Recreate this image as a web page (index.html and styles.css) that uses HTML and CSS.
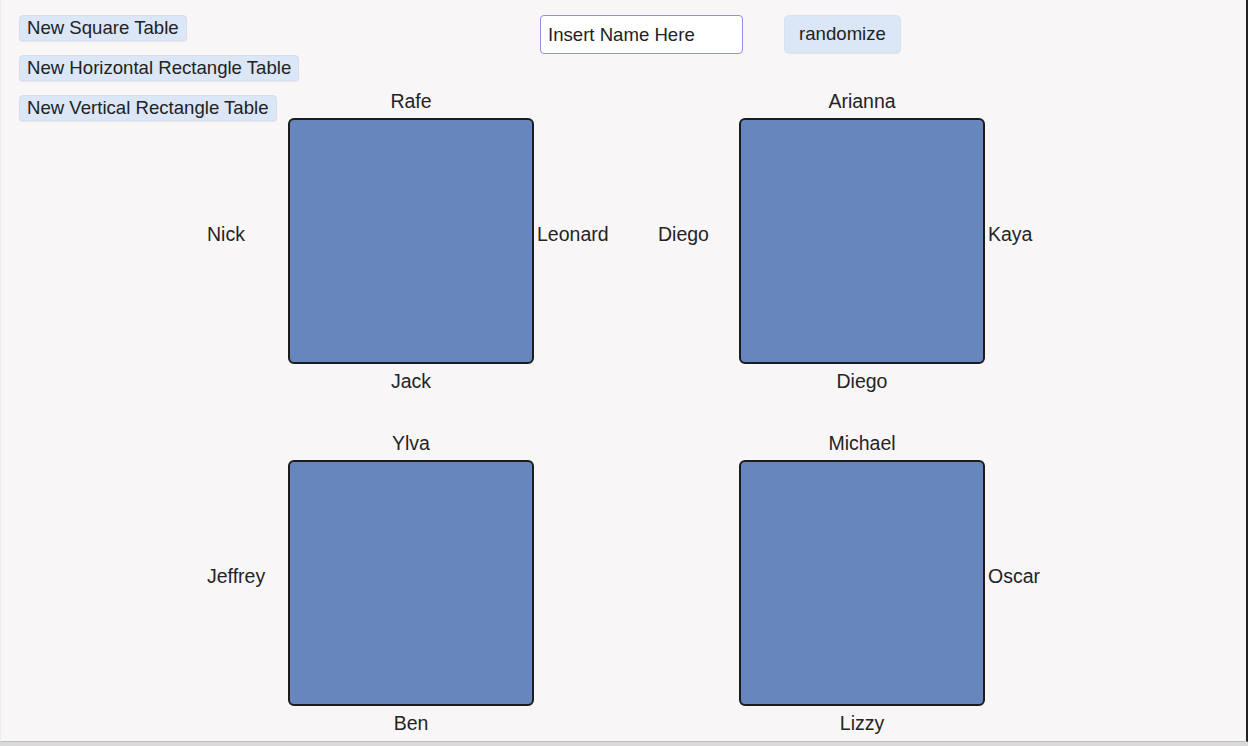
FILE: index.html
```html
<!DOCTYPE html>
<html lang="en">
<head>
    <meta charset="UTF-8">
    <meta name="viewport" content="width=device-width, initial-scale=1.0">
    <title>Seating Chart</title>
    <link rel="stylesheet" href="styles.css">
</head>
<body>
    <div class="page">
        <div class="tools">
            <button class="tool-btn">New Square Table</button>
            <button class="tool-btn">New Horizontal Rectangle Table</button>
            <button class="tool-btn">New Vertical Rectangle Table</button>
        </div>

        <header class="toolbar">
            <input type="text" class="name-input" value="Insert Name Here">
            <button class="randomize-btn" onclick="randomize()">randomize</button>
        </header>

        <main class="floor" id="floor">
            <div class="unit">
                <span class="seat top">Rafe</span>
                <span class="seat left">Nick</span>
                <div class="table"></div>
                <span class="seat right">Leonard</span>
                <span class="seat bottom">Jack</span>
            </div>
            <div class="unit">
                <span class="seat top">Arianna</span>
                <span class="seat left">Diego</span>
                <div class="table"></div>
                <span class="seat right">Kaya</span>
                <span class="seat bottom">Diego</span>
            </div>
            <div class="unit">
                <span class="seat top">Ylva</span>
                <span class="seat left">Jeffrey</span>
                <div class="table"></div>
                <span class="seat right"></span>
                <span class="seat bottom">Ben</span>
            </div>
            <div class="unit">
                <span class="seat top">Michael</span>
                <span class="seat left"></span>
                <div class="table"></div>
                <span class="seat right">Oscar</span>
                <span class="seat bottom">Lizzy</span>
            </div>
        </main>
    </div>

    <script>
        function randomize() {
            const seats = Array.from(document.querySelectorAll('.seat'));
            const names = seats.map(s => s.textContent);
            for (let i = names.length - 1; i > 0; i--) {
                const j = Math.floor(Math.random() * (i + 1));
                [names[i], names[j]] = [names[j], names[i]];
            }
            seats.forEach((s, i) => s.textContent = names[i]);
        }
    </script>
</body>
</html>
```

FILE: styles.css
```css
body {
    margin: 0;
    background-color: #dadada;
    font-family: "Liberation Sans", Arial, sans-serif;
    color: #242424;
}

.page {
    position: relative;
    box-sizing: border-box;
    height: 742px;
    background-color: #f8f6f7;
    border-left: 1px solid #ececec;
    border-right: 2px solid #232323;
    border-bottom: 1px solid #bdbdbd;
    padding-top: 15px;
}

/* floating palette of table makers */
.tools {
    position: absolute;
    top: 15px;
    left: 18px;
    display: flex;
    flex-direction: column;
    align-items: flex-start;
    gap: 14px;
}

.tool-btn {
    font-family: inherit;
    font-size: 18.6px;
    color: #222;
    background-color: #dbe6f6;
    border: 1px solid #d3dff0;
    border-radius: 4px;
    box-shadow: 0 1px 1px rgba(0,0,0,0.08);
    height: 26px;
    padding: 0 7px;
    line-height: 22px;
}

.toolbar {
    display: flex;
    align-items: flex-start;
    gap: 41px;
    padding-left: 539px;
}

.name-input {
    box-sizing: border-box;
    width: 203px;
    height: 39px;
    padding: 0 7px;
    font-family: inherit;
    font-size: 18.6px;
    color: #222;
    background-color: #fff;
    border: 1px solid #8e8ef2;
    border-radius: 4px;
    outline: none;
}

.randomize-btn {
    box-sizing: border-box;
    width: 117px;
    height: 38px;
    font-family: inherit;
    font-size: 18.6px;
    color: #222;
    background-color: #dbe6f6;
    border: 1px solid #d6e1f1;
    border-radius: 5px;
    box-shadow: 0 1px 1px rgba(0,0,0,0.08);
}

.floor {
    display: grid;
    grid-template-columns: 451px 451px;
    row-gap: 42px;
    padding-left: 206px;
    margin-top: 37px;
}

.unit {
    display: grid;
    grid-template-columns: 81px 246px auto;
    grid-template-rows: 20px 246px 20px;
    row-gap: 7px;
}

.seat {
    font-size: 19.5px;
    line-height: 20px;
    white-space: nowrap;
}

.seat.top {
    grid-column: 2;
    grid-row: 1;
    text-align: center;
}

.seat.bottom {
    grid-column: 2;
    grid-row: 3;
    text-align: center;
}

.seat.left {
    grid-column: 1;
    grid-row: 2;
    align-self: center;
    margin-bottom: 14px;
}

.seat.right {
    grid-column: 3;
    grid-row: 2;
    align-self: center;
    margin-bottom: 14px;
    padding-left: 3px;
}

.table {
    grid-column: 2;
    grid-row: 2;
    box-sizing: border-box;
    background-color: #6686bd;
    border: 2px solid #1c1c1c;
    border-radius: 6px;
}
```
